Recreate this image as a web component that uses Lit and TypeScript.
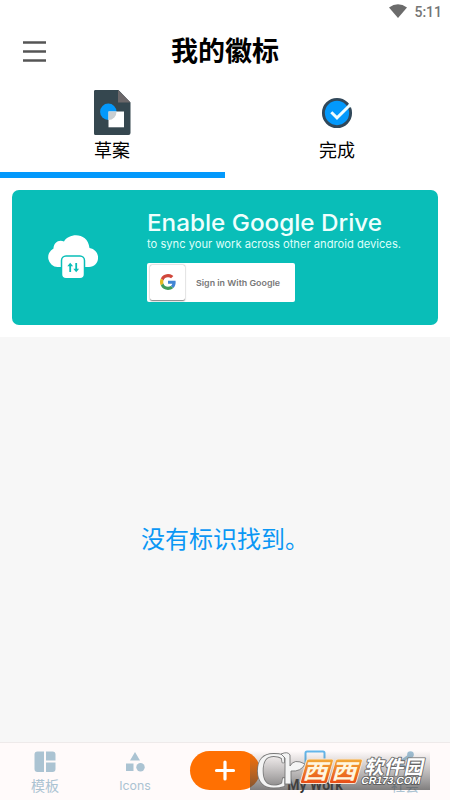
import { LitElement, html, css, svg } from "lit";
import { customElement, property } from "lit/decorators.js";

@customElement("draft-tabs")
class DraftTabs extends LitElement {
  static styles = css`
    :host { display: grid; grid-template-columns: 1fr 1fr; height: 102px; }
    .tab { display: flex; flex-direction: column; align-items: center; box-sizing: border-box; padding: 14px 1px 0 0; border-bottom: 6px solid transparent; }
    .active { border-bottom-color: #0399fc; }
    svg { display: block; width: 46px; height: 46px; flex: none; }
    .label { font: 18px/26px "Noto Sans CJK SC", sans-serif; color: #000; margin-top: -0.5px; }
  `;
  render() {
    return html`
      <div class="tab active">
        <svg viewBox="0 0 46 46">
          <path d="M6 0h23.500l12 12.500v30.500a2 2 0 0 1-2 2H6.500a1.500 1.500 0 0 1-1.500-1.500V1.500A1.500 1.500 0 0 1 6 0Z" fill="#35474f"/>
          <path d="M29 0l12.500 12.500H29Z" fill="#6b6769"/>
          <circle cx="19.300" cy="21.800" r="8.200" fill="#0399fc"/>
          <path d="M19.500 21.500h15.500v15.800H19.500Z" fill="#fff"/>
          <path d="M19.500 21.500h8a8.200 8.200 0 0 1-8 8.500Z" fill="#c9ced1"/>
        </svg>
        <span class="label">草案</span>
      </div>
      <div class="tab">
        <svg viewBox="0 0 46 46">
          <circle cx="23" cy="23" r="13.600" fill="#0399fc" stroke="#31485a" stroke-width="2.900"/>
          <path d="M34 15.500l2-3 3 4-3 1Z" fill="#fff"/>
          <path d="M17.300 22.200l5.700 5.700L36 15" fill="none" stroke="#effdff" stroke-width="2.900"/>
        </svg>
        <span class="label">完成</span>
      </div>`;
  }
}

@customElement("drive-card")
class DriveCard extends LitElement {
  static styles = css`
    :host { display: grid; grid-template-columns: 135px 1fr; height: 135px; border-radius: 7px; background: #09beb8; }
    .cloud { width: 50px; height: 44px; margin: 45px 0 0 36px; }
    .content { display: flex; flex-direction: column; align-items: flex-start; padding-top: 17px; }
    .copy { display: block; width: 260px; height: 48px; overflow: visible; }
    .signin { display: flex; align-items: center; width: 148px; height: 39px; margin-top: 8px; background: #fff; border-radius: 2px; }
    .logo { box-sizing: border-box; width: 35px; height: 35px; margin-left: 3px; display: flex; align-items: center; justify-content: center; border-radius: 2px; box-shadow: 0 0.500px 1.500px #0008; }
    .logo svg { width: 16px; height: 16px; margin-bottom: 1px; }
    .cta { width: 86px; height: 16px; margin: 0 0 2px 11px; }
    text { font-family: Inter, "Open Sans", sans-serif; }
  `;
  render() {
    return html`
      <svg class="cloud" viewBox="0 0 50 44">
        <path d="M9.500 32A9.800 9.800 0 0 1 5.500 13.500C5.500 7.500 11 4 16 6.500C21-2.500 40-3 41.500 13C53.500 15 52.500 32 41 32Z" fill="#fff"/>
        <rect x="13.500" y="21" width="23" height="22.700" rx="4.500" fill="#fff" stroke="#09beb8" stroke-width="1.500"/>
        <path d="M22.200 37v-8M28.200 28v8" stroke="#09beb8" stroke-width="1.800"/>
        <path d="M19.300 31.200l2.900-3.500 2.900 3.500ZM25.300 33.800l2.900 3.500 2.900-3.500Z" fill="#09beb8"/>
      </svg>
      <div class="content">
        <svg class="copy" viewBox="0 0 260 48">
          <text x="0" y="24" font-size="23.300" font-weight="450" fill="#effffd" textLength="235" lengthAdjust="spacingAndGlyphs">Enable Google Drive</text>
          <text x="0" y="41" font-size="11" fill="#dffefa" textLength="254" lengthAdjust="spacingAndGlyphs">to sync your work across other android devices.</text>
        </svg>
        <div class="signin">
          <div class="logo"><svg viewBox="0 0 48 48">
            <path fill="#d0473b" d="M24 9.500c3.500 0 6.700 1.200 9.200 3.600l6.900-6.900A24 24 0 0 0 2.600 13.200l8 6.200A14 14 0 0 1 24 9.500Z"/>
            <path fill="#4285d4" d="M47 24.500c0-1.600-.2-3.100-.4-4.500H24v9h13c-.6 3-2.300 5.500-4.800 7.200l7.700 6C44.400 38 47 32 47 24.500Z"/>
            <path fill="#e7ba24" d="M10.500 28.600a14 14 0 0 1 0-9.200l-8-6.200a24 24 0 0 0 0 21.600Z"/>
            <path fill="#429b5b" d="M24 48c6.500 0 12-2.100 15.900-5.800l-7.700-6c-2.200 1.400-5 2.300-8.200 2.300a14 14 0 0 1-13.500-9.900l-8 6.200A24 24 0 0 0 24 48Z"/>
          </svg></div>
          <svg class="cta" viewBox="0 0 86 16"><text x="0" y="12" font-size="8" font-weight="600" fill="#777" textLength="84" lengthAdjust="spacingAndGlyphs">Sign in With Google</text></svg>
        </div>
      </div>`;
  }
}

@customElement("bottom-nav")
class BottomNav extends LitElement {
  static styles = css`
    :host { display: grid; grid-template-columns: repeat(5, 1fr); height: 58px; box-sizing: border-box; border-top: 1px solid #eeeaea; background: #fffafa; overflow: hidden; }
    .item { display: flex; flex-direction: column; align-items: center; padding-top: 6px; color: #abc3d2; font: 14px/20px "Noto Sans CJK SC", sans-serif; white-space: nowrap; }
    svg { width: 26px; height: 26px; display: block; flex: none; }
    .latin { font: 12.300px/20px Inter, sans-serif; margin-top: 1px; }
    .work { font: 700 14px/20px Roboto, sans-serif; color: #333; }
    .create { width: 70px; height: 39px; border-radius: 20px; background: #ff7002; display: flex; align-items: center; justify-content: center; margin: 8px 0 0 10px; }
  `;
  render() {
    return html`
      <div class="item"><svg viewBox="0 0 26 26"><path fill="currentColor" d="M5.500 2.500h6.500v20.500H5.500a3 3 0 0 1-3-3V5.500a3 3 0 0 1 3-3ZM14 2.500h6.500a3 3 0 0 1 3 3v6h-9.500ZM14 13.500h9.500v6.500a3 3 0 0 1-3 3h-6.500Z"/></svg><span>模板</span></div>
      <div class="item"><svg viewBox="0 0 26 26"><path fill="currentColor" d="M13 3l5 8.500H8ZM4 14.500h7.500v7.500H4Z"/><circle cx="18.500" cy="18.200" r="4.200" fill="currentColor"/></svg><span class="latin">Icons</span></div>
      <div class="create"><svg viewBox="0 0 26 26"><path d="M13 4v17M4.500 12.500h17" stroke="#fff" stroke-width="3.200" stroke-linecap="round"/></svg></div>
      <div class="item"><svg viewBox="0 0 26 26"><path d="M3.500 21V4a1.500 1.500 0 0 1 1.500-1.500h16a1.500 1.500 0 0 1 1.500 1.500v17Z" fill="none" stroke="#64b7ec" stroke-width="2"/></svg><span class="work">My Work</span></div>
      <div class="item"><svg viewBox="0 0 26 26"><circle cx="18.500" cy="5.500" r="3.300" fill="#9fbfd4"/><path d="M7 14l10-7M7 14l10 7" stroke="#9fbfd4" stroke-width="3"/></svg><span>社会</span></div>`;
  }
}

@customElement("site-mark")
class SiteMark extends LitElement {
  static styles = css`
    :host { display: block; width: 180px; height: 42px; }
    svg { display: block; overflow: visible; }
    text { paint-order: stroke fill; stroke-linejoin: round; }
    .serif { font-family: "Liberation Serif", serif; }
    .han { font-family: "Noto Sans CJK SC", sans-serif; font-weight: 700; }
    .sans { font-family: "Liberation Sans", sans-serif; font-weight: 700; }
  `;
  render() {
    const tile = (x: number) => svg`<g transform="skewX(-16)">
      <rect x=${x} y="9" width="27" height="24.500" rx="2" fill="url(#flame)" stroke="#f7e5d5" stroke-width="1"/>
      <text class="han" transform="translate(${x + 1} 29) scale(1.08 .92)" font-size="23" fill="#fff6df">西</text>
    </g>`;
    return html`<svg width="180" height="42" viewBox="0 0 180 42">
      <defs>
        <linearGradient id="shade" x2="0" y2="1"><stop stop-color="#555" stop-opacity="0"/><stop offset=".45" stop-color="#555" stop-opacity=".32"/><stop offset="1" stop-color="#444" stop-opacity=".68"/></linearGradient>
        <linearGradient id="flame" x2="0" y2="1"><stop stop-color="#f3aa35"/><stop offset="1" stop-color="#e84b17"/></linearGradient>
      </defs>
      <rect y="1" width="180" height="39" fill="url(#shade)"/>
      <text class="serif" x="6" y="36.500" font-size="50" fill="#f4f4f4" stroke="#777" stroke-width="1.800" textLength="31" lengthAdjust="spacingAndGlyphs">C</text>
      <path d="M31 4Q38 1 40 5V16Q44 8 55 14Q51 22 41 21V34H35V8Z" fill="#f4f4f4" stroke="#777" stroke-width=".9"/>
      ${tile(59.5)}${tile(88.500)}
      <g transform="skewX(-12)">
        <text class="han" x="119" y="24" font-size="19.500" fill="#fff" stroke="#666" stroke-width="1.700" textLength="59">软件园</text>
        <text class="sans" x="118" y="34" font-size="10.500" fill="#fff" stroke="#555" stroke-width="1.500" textLength="59" lengthAdjust="spacingAndGlyphs">CR173.COM</text>
      </g>
    </svg>`;
  }
}

@customElement("app-root")
class AppRoot extends LitElement {
  @property() time = "5:11";
  static styles = css`
    :host { display: flex; flex-direction: column; position: relative; height: 800px; width: 450px; overflow: hidden; background: #fff; }
    .status { height: 24px; flex: none; box-sizing: border-box; display: flex; align-items: center; justify-content: flex-end; gap: 7px; padding-right: 8px; font: 500 14px/24px Roboto, sans-serif; color: #757575; }
    .status svg { width: 18px; height: 14px; margin-top: -2px; }
    .header { height: 52px; display: grid; grid-template-columns: 70px 1fr 70px; align-items: center; flex: none; }
    .menu { width: 23px; height: 22px; margin: 3px 0 0 23px; }
    h1 { font: 700 27px/40px "Noto Sans CJK SC", sans-serif; text-align: center; margin: 0; color: #000; }
    draft-tabs { flex: none; }
    drive-card { margin: 12px 12px; flex: none; }
    .empty { flex: 1; box-sizing: border-box; padding-bottom: 3px; background: #f7f7f7; display: flex; align-items: center; justify-content: center; color: #0b97f5; font: 24px/36px "Noto Sans CJK SC", sans-serif; }
    bottom-nav { flex: none; }
    site-mark { position: absolute; right: 20px; bottom: 8px; }
  `;
  render() {
    return html`
      <div class="status"><svg viewBox="0 0 18 14"><path d="M0 3.500Q9-3 18 3.500L9 14Z" fill="#6b6b6b"/></svg><span>${this.time}</span></div>
      <div class="header"><svg class="menu" viewBox="0 0 23 22"><path d="M0 1.500h23M0 10.500h23M0 19.500h23" stroke="#555" stroke-width="2.500"/></svg><h1>我的徽标</h1></div>
      <draft-tabs></draft-tabs>
      <drive-card></drive-card>
      <div class="empty">没有标识找到。</div>
      <bottom-nav></bottom-nav>
      <site-mark></site-mark>`;
  }
}
